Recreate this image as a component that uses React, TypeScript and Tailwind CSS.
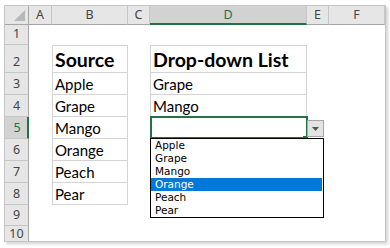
import { Fragment } from "react";

const COLS = ["A", "B", "C", "D", "E", "F"];
const ROWS = [1, 2, 3, 4, 5, 6, 7, 8, 9, 10];
const LIST = ["Apple", "Grape", "Mango", "Orange", "Peach", "Pear"];

const VALUES: Record<string, string> = {
  B2: "Source",
  D2: "Drop-down List",
  B3: "Apple",
  B4: "Grape",
  B5: "Mango",
  B6: "Orange",
  B7: "Peach",
  B8: "Pear",
  D3: "Grape",
  D4: "Mango",
};

const BOXED = new Set(["B2", "B3", "B4", "B5", "B6", "B7", "B8", "D2", "D3", "D4"]);

function Corner() {
  return (
    <div className="relative border-r border-b border-[#a6a6a6] bg-[#e6e6e6]">
      <svg viewBox="0 0 11 11" className="absolute right-[3px] bottom-[3px] h-[11px] w-[11px]">
        <path d="M11 0V11H0z" fill="#b8b8b8" />
      </svg>
    </div>
  );
}

function ColHeader({ c }: { c: string }) {
  if (c === "D") {
    return (
      <div className="flex items-center justify-center border-r border-b-2 border-r-[#c6c6c6] border-b-[#217346] bg-[#d2d2d2] pt-[1px] font-['Noto_Sans',sans-serif] text-[12.5px] text-[#217346]">
        {c}
      </div>
    );
  }
  return (
    <div className="flex items-center justify-center border-r border-b border-r-[#c6c6c6] border-b-[#a6a6a6] bg-[#e6e6e6] font-['Noto_Sans',sans-serif] text-[12.5px] text-[#444]">
      {c}
    </div>
  );
}

function RowHeader({ n }: { n: number }) {
  if (n === 5) {
    return (
      <div className="flex items-end justify-center border-r-2 border-b border-r-[#217346] border-b-[#c6c6c6] bg-[#d2d2d2] pl-[2px] font-['Noto_Sans',sans-serif] text-[12.5px] leading-[20px] text-[#217346]">
        {n}
      </div>
    );
  }
  // last row is cut by the window edge
  if (n === 10) {
    return (
      <div className="flex items-start justify-center border-r border-r-[#a6a6a6] bg-[#e6e6e6] pt-px font-['Noto_Sans',sans-serif] text-[12.5px] leading-[14px] text-[#444]">
        {n}
      </div>
    );
  }
  return (
    <div className="flex items-end justify-center border-r border-b border-r-[#a6a6a6] border-b-[#c6c6c6] bg-[#e6e6e6] font-['Noto_Sans',sans-serif] text-[12.5px] leading-[20px] text-[#444]">
      {n}
    </div>
  );
}

function DropCell() {
  return (
    <div className="relative">
      {/* selection frame */}
      <div className="absolute -top-px left-0 h-[23px] w-[158px] border-2 border-[#217346]" />
      <div className="absolute top-[19px] left-[153px] h-[4px] w-[5px] bg-[#217346]" />
      {/* arrow button */}
      <div className="absolute top-[3px] left-[157px] flex h-[17px] w-[17px] items-center justify-center border border-[#a6a6a6] bg-[#e3e3e3]">
        <svg viewBox="0 0 7 4" className="h-[4px] w-[7px]">
          <path d="M0 0h7L3.5 4z" fill="#555" />
        </svg>
      </div>
      {/* list */}
      <ul className="absolute top-[21px] left-0 z-10 w-[174px] border border-black bg-white font-['DejaVu_Sans',sans-serif] text-[10.5px] leading-[13px] text-black">
        {LIST.map((item) => (
          <li
            key={item}
            className={item === "Orange" ? "mr-[1px] h-[13px] bg-[#0078d7] pl-[4px] text-white" : "h-[13px] pl-[4px]"}
          >
            {item}
          </li>
        ))}
      </ul>
    </div>
  );
}

function Cell({ c, r }: { c: string; r: number }) {
  const key = `${c}${r}`;
  if (key === "D5") return <DropCell />;
  const text = VALUES[key];
  const bold = r === 2;
  const box = BOXED.has(key)
    ? r === 2
      ? "border border-[#d4d4d4]"
      : "border-x border-b border-[#d4d4d4]"
    : "";
  return (
    <div
      className={`flex items-end whitespace-nowrap pb-px pl-[2px] font-[Lato,sans-serif] text-black ${box} ${
        bold ? "text-[19.5px] leading-[23px] font-bold" : "text-[15px] leading-[18px]"
      }`}
    >
      {text}
    </div>
  );
}

export default function App() {
  return (
    <div className="h-[248px] w-[390px] bg-white pt-[5px] pl-[4px]">
      <div className="h-[237px] w-[382px] overflow-hidden border border-[#c6c6c6] bg-white shadow-[2px_2px_3px_rgba(0,0,0,0.18)]">
        <div className="grid grid-cols-[24px_23px_76px_22px_157px_22px_56px] grid-rows-[19px_20px_28px_22px_22px_22px_22px_22px_22px_21px_15px]">
          <Corner />
          {COLS.map((c) => (
            <ColHeader key={c} c={c} />
          ))}
          {ROWS.map((r) => (
            <Fragment key={r}>
              <RowHeader n={r} />
              {COLS.map((c) => (
                <Cell key={c} c={c} r={r} />
              ))}
            </Fragment>
          ))}
        </div>
      </div>
    </div>
  );
}
